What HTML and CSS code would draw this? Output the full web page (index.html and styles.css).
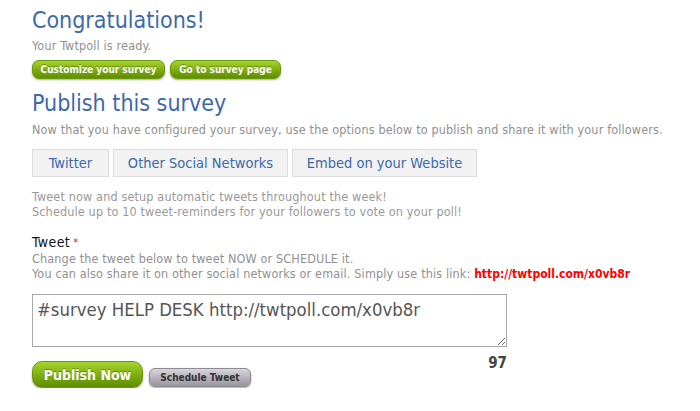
FILE: index.html
```html
<!DOCTYPE html>
<html>
<head>
<meta charset="utf-8">
<link rel="stylesheet" href="styles.css">
</head>
<body>
<div class="page">
  <h1 class="title">Congratulations!</h1>
  <p class="muted ready">Your Twtpoll is ready.</p>
  <div class="btn-row">
    <a class="btn-green small btn-customize">Customize your survey</a>
    <a class="btn-green small btn-goto">Go to survey page</a>
  </div>

  <h2 class="title sub">Publish this survey</h2>
  <p class="muted desc">Now that you have configured your survey, use the options below to publish and share it with your followers.</p>

  <div class="tabs">
    <div class="tab tab-twitter">Twitter</div>
    <div class="tab tab-social">Other Social Networks</div>
    <div class="tab tab-embed">Embed on your Website</div>
  </div>

  <p class="muted info">Tweet now and setup automatic tweets throughout the week!<br>Schedule up to 10 tweet-reminders for your followers to vote on your poll!</p>

  <div class="label">Tweet<span class="req">*</span></div>
  <p class="muted help">Change the tweet below to tweet NOW or SCHEDULE it.<br>You can also share it on other social networks or email. Simply use this link: <span class="link">http://twtpoll.com/x0vb8r</span></p>

  <div class="tweet-box">
    <textarea class="tweet">#survey HELP DESK http://twtpoll.com/x0vb8r</textarea>
    <div class="count">97</div>
  </div>
  <div class="actions">
    <a class="btn-green big">Publish Now</a>
    <a class="btn-grey">Schedule Tweet</a>
  </div>
</div>
</body>
</html>
```
FILE: styles.css
```css
html, body {
  margin: 0;
  padding: 0;
  background: #fff;
}
body {
  font-family: "DejaVu Sans Condensed", "DejaVu Sans", sans-serif;
}
.page {
  padding: 6px 0 0 32px;
}
.title {
  margin: 0;
  color: #3c69a9;
  font-weight: normal;
  font-size: 23px;
  line-height: 28px;
}
.sub {
  font-size: 23px;
  line-height: 26px;
  margin-top: 11px;
}
.muted {
  margin: 0;
  color: #909090;
  font-size: 12.5px;
  line-height: 15px;
  letter-spacing: 0.15px;
}
.ready {
  margin-top: 4px;
}
.btn-row {
  display: flex;
  gap: 5px;
  margin-top: 7px;
}
.btn-green {
  display: inline-flex;
  align-items: center;
  justify-content: center;
  white-space: nowrap;
  color: #fff;
  font-weight: bold;
  border-radius: 7px;
  background: linear-gradient(#a6d42e, #80af12 50%, #5e8d02);
  border: 1px solid #6a9a08;
  box-shadow: 0 1px 2px rgba(0,0,0,0.35);
  text-shadow: 0 -1px 0 rgba(0,0,0,0.3);
  box-sizing: border-box;
}
.small {
  height: 19px;
  font-size: 10px;
  padding: 0;
}
.btn-customize { width: 133px; }
.btn-goto { width: 111px; }
.desc {
  margin-top: 6px;
}
.tabs {
  display: flex;
  gap: 4px;
  margin-top: 12px;
}
.tab {
  box-sizing: border-box;
  height: 28px;
  display: flex;
  align-items: center;
  justify-content: center;
  background: #f2f2f2;
  border: 1px solid #dcdcdc;
  color: #3c69a9;
  font-size: 14.5px;
}
.tab-twitter { width: 77px; }
.tab-social { width: 175px; }
.tab-embed { width: 185px; }
.info {
  margin-top: 12px;
  color: #999;
}
.label {
  margin-top: 15px;
  font-size: 14px;
  line-height: 17px;
  letter-spacing: 0.4px;
  color: #111;
}
.req {
  color: #e4141b;
  font-size: 11px;
  vertical-align: top;
  margin-left: 3px;
}
.help {
  margin-top: 0;
}
.link {
  color: #f00;
  font-weight: bold;
  font-size: 12px;
  letter-spacing: 0;
}
.tweet-box {
  width: 475px;
  margin-top: 12px;
}
.tweet {
  display: block;
  box-sizing: border-box;
  width: 475px;
  height: 53px;
  margin: 0;
  padding: 4px 4px;
  border: 1px solid #aaa;
  font-family: "DejaVu Sans Condensed", "DejaVu Sans", sans-serif;
  font-size: 18.4px;
  color: #555;
  resize: both;
}
.count {
  text-align: right;
  font-weight: bold;
  font-size: 15px;
  color: #444;
  margin-top: 8px;
  line-height: 17px;
}
.actions {
  display: flex;
  align-items: center;
  gap: 6px;
  margin-top: -11px;
}
.big {
  width: 111px;
  height: 27px;
  font-size: 14px;
  border-radius: 10px;
}
.btn-grey {
  display: inline-flex;
  align-items: center;
  justify-content: center;
  box-sizing: border-box;
  width: 102px;
  height: 19px;
  margin-top: 6px;
  border-radius: 6px;
  background: linear-gradient(#d8d6dc, #b3b0b9 55%, #9a97a0);
  border: 1px solid #8d8a93;
  box-shadow: 0 1px 2px rgba(0,0,0,0.35);
  color: #333;
  font-weight: bold;
  font-size: 10px;
}
```
